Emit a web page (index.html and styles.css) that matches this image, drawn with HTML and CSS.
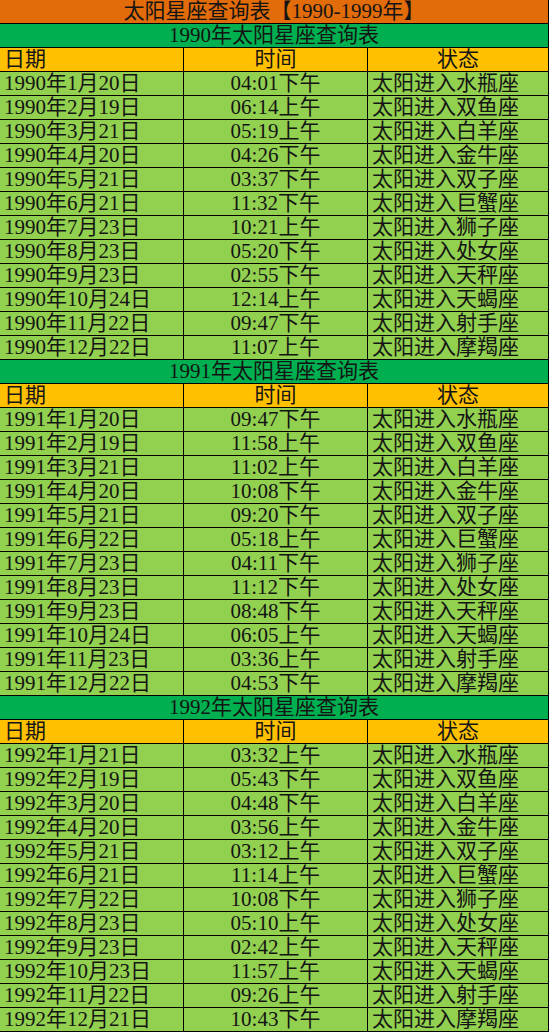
FILE: index.html
```html
<!DOCTYPE html>
<html lang="zh-CN">
<head>
<meta charset="utf-8">
<title>太阳星座查询表【1990-1999年】</title>
<link rel="stylesheet" href="styles.css">
</head>
<body>
<div class="sheet">
  <div class="cell title span">太阳星座查询表【1990-1999年】</div>

  <div class="cell year span">1990年太阳星座查询表</div>
  <div class="cell head">日期</div><div class="cell head center">时间</div><div class="cell head center">状态</div>
  <div class="cell">1990年1月20日</div><div class="cell center">04:01下午</div><div class="cell">太阳进入水瓶座</div>
  <div class="cell">1990年2月19日</div><div class="cell center">06:14上午</div><div class="cell">太阳进入双鱼座</div>
  <div class="cell">1990年3月21日</div><div class="cell center">05:19上午</div><div class="cell">太阳进入白羊座</div>
  <div class="cell">1990年4月20日</div><div class="cell center">04:26下午</div><div class="cell">太阳进入金牛座</div>
  <div class="cell">1990年5月21日</div><div class="cell center">03:37下午</div><div class="cell">太阳进入双子座</div>
  <div class="cell">1990年6月21日</div><div class="cell center">11:32下午</div><div class="cell">太阳进入巨蟹座</div>
  <div class="cell">1990年7月23日</div><div class="cell center">10:21上午</div><div class="cell">太阳进入狮子座</div>
  <div class="cell">1990年8月23日</div><div class="cell center">05:20下午</div><div class="cell">太阳进入处女座</div>
  <div class="cell">1990年9月23日</div><div class="cell center">02:55下午</div><div class="cell">太阳进入天秤座</div>
  <div class="cell">1990年10月24日</div><div class="cell center">12:14上午</div><div class="cell">太阳进入天蝎座</div>
  <div class="cell">1990年11月22日</div><div class="cell center">09:47下午</div><div class="cell">太阳进入射手座</div>
  <div class="cell">1990年12月22日</div><div class="cell center">11:07上午</div><div class="cell">太阳进入摩羯座</div>

  <div class="cell year span">1991年太阳星座查询表</div>
  <div class="cell head">日期</div><div class="cell head center">时间</div><div class="cell head center">状态</div>
  <div class="cell">1991年1月20日</div><div class="cell center">09:47下午</div><div class="cell">太阳进入水瓶座</div>
  <div class="cell">1991年2月19日</div><div class="cell center">11:58上午</div><div class="cell">太阳进入双鱼座</div>
  <div class="cell">1991年3月21日</div><div class="cell center">11:02上午</div><div class="cell">太阳进入白羊座</div>
  <div class="cell">1991年4月20日</div><div class="cell center">10:08下午</div><div class="cell">太阳进入金牛座</div>
  <div class="cell">1991年5月21日</div><div class="cell center">09:20下午</div><div class="cell">太阳进入双子座</div>
  <div class="cell">1991年6月22日</div><div class="cell center">05:18上午</div><div class="cell">太阳进入巨蟹座</div>
  <div class="cell">1991年7月23日</div><div class="cell center">04:11下午</div><div class="cell">太阳进入狮子座</div>
  <div class="cell">1991年8月23日</div><div class="cell center">11:12下午</div><div class="cell">太阳进入处女座</div>
  <div class="cell">1991年9月23日</div><div class="cell center">08:48下午</div><div class="cell">太阳进入天秤座</div>
  <div class="cell">1991年10月24日</div><div class="cell center">06:05上午</div><div class="cell">太阳进入天蝎座</div>
  <div class="cell">1991年11月23日</div><div class="cell center">03:36上午</div><div class="cell">太阳进入射手座</div>
  <div class="cell">1991年12月22日</div><div class="cell center">04:53下午</div><div class="cell">太阳进入摩羯座</div>

  <div class="cell year span">1992年太阳星座查询表</div>
  <div class="cell head">日期</div><div class="cell head center">时间</div><div class="cell head center">状态</div>
  <div class="cell">1992年1月21日</div><div class="cell center">03:32上午</div><div class="cell">太阳进入水瓶座</div>
  <div class="cell">1992年2月19日</div><div class="cell center">05:43下午</div><div class="cell">太阳进入双鱼座</div>
  <div class="cell">1992年3月20日</div><div class="cell center">04:48下午</div><div class="cell">太阳进入白羊座</div>
  <div class="cell">1992年4月20日</div><div class="cell center">03:56上午</div><div class="cell">太阳进入金牛座</div>
  <div class="cell">1992年5月21日</div><div class="cell center">03:12上午</div><div class="cell">太阳进入双子座</div>
  <div class="cell">1992年6月21日</div><div class="cell center">11:14上午</div><div class="cell">太阳进入巨蟹座</div>
  <div class="cell">1992年7月22日</div><div class="cell center">10:08下午</div><div class="cell">太阳进入狮子座</div>
  <div class="cell">1992年8月23日</div><div class="cell center">05:10上午</div><div class="cell">太阳进入处女座</div>
  <div class="cell">1992年9月23日</div><div class="cell center">02:42上午</div><div class="cell">太阳进入天秤座</div>
  <div class="cell">1992年10月23日</div><div class="cell center">11:57上午</div><div class="cell">太阳进入天蝎座</div>
  <div class="cell">1992年11月22日</div><div class="cell center">09:26上午</div><div class="cell">太阳进入射手座</div>
  <div class="cell">1992年12月21日</div><div class="cell center">10:43下午</div><div class="cell">太阳进入摩羯座</div>
</div>
</body>
</html>
```
FILE: styles.css
```css
html, body {
  margin: 0;
  padding: 0;
  background: #ffffff;
}

.sheet {
  display: grid;
  grid-template-columns: 184px 184px 181px;
  grid-auto-rows: 24px;
  width: 549px;
  background: #92d050;
  font-family: "Liberation Serif", "Noto Sans CJK SC", serif;
  font-size: 21px;
  color: #141414;
}

.cell {
  box-sizing: border-box;
  border-right: 1px solid #000;
  border-bottom: 1px solid #000;
  padding: 0 4px;
  line-height: 22px;
  white-space: nowrap;
  overflow: hidden;
}

.center {
  text-align: center;
}

.span {
  grid-column: 1 / -1;
  text-align: center;
}

.title {
  background: #e26b0a;
}

.year {
  background: #00b050;
}

.head {
  background: #ffc000;
}
```
